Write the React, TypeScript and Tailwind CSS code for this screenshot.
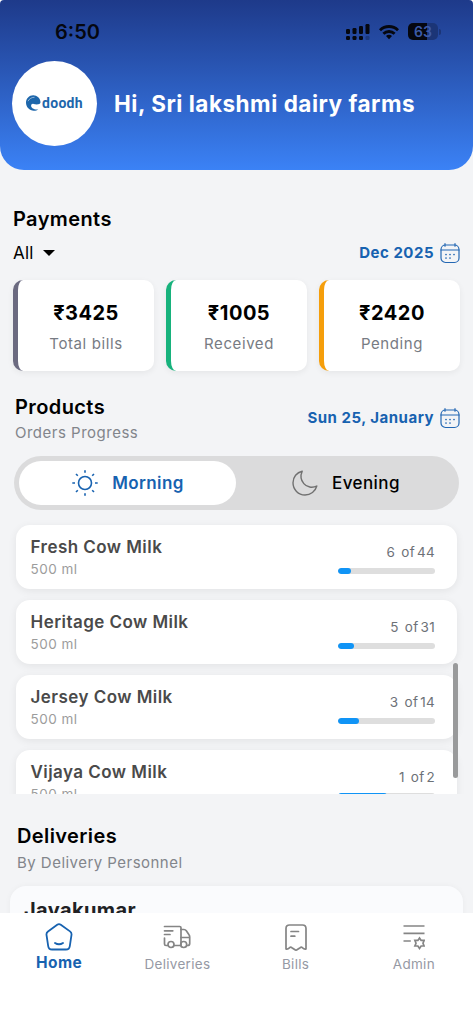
import type { ReactNode } from 'react';

type Payment = { amount: string; label: string; border: string };
type Product = { name: string; size: string; done: number; total: number };

const payments: Payment[] = [
  { amount: '₹3425', label: 'Total bills', border: 'border-[#6b6a80]' },
  { amount: '₹1005', label: 'Received', border: 'border-[#17b27c]' },
  { amount: '₹2420', label: 'Pending', border: 'border-[#f59e0b]' },
];

const products: Product[] = [
  { name: 'Fresh Cow Milk', size: '500 ml', done: 6, total: 44 },
  { name: 'Heritage Cow Milk', size: '500 ml', done: 5, total: 31 },
  { name: 'Jersey Cow Milk', size: '500 ml', done: 3, total: 14 },
  { name: 'Vijaya Cow Milk', size: '500 ml', done: 1, total: 2 },
];

function StatusIcons() {
  return (
    <div className="flex items-center gap-[9px] text-[#05070f]">
      <svg width="24" height="18" viewBox="0 0 24 18" fill="currentColor">
        <rect x="0" y="6" width="4" height="5" rx="1.2" />
        <rect x="6.5" y="5" width="4" height="6" rx="1.2" />
        <rect x="13" y="3" width="4" height="8" rx="1.2" />
        <rect x="19.5" y="1" width="4" height="10" rx="1.2" />
        <rect x="0" y="13" width="4" height="4" rx="1.2" />
        <rect x="6.5" y="13" width="4" height="4" rx="1.2" />
        <rect x="13" y="13" width="4" height="4" rx="1.2" />
        <rect x="19.5" y="13" width="4" height="4" rx="1.2" opacity="0.25" />
      </svg>
      <svg width="20" height="16" viewBox="0 0 20 16" fill="none" stroke="currentColor" strokeWidth="2.8">
        <path d="M1 6.2a12.8 12.8 0 0 1 18 0" />
        <path d="M4.4 9.8a8 8 0 0 1 11.2 0" />
        <path d="M10 10.8c1.2 0 2.2.4 3 1.1L10 15.2l-3-3.3c.8-.7 1.8-1.1 3-1.1z" fill="currentColor" stroke="none" />
      </svg>
      <div className="flex items-center gap-px">
        <div className="flex h-[17px] w-[30px] items-center justify-center overflow-hidden rounded-[5px] bg-linear-to-r from-[#05070f] from-63% to-[#1b3577] to-63% text-[14px] font-semibold text-[#3c5ba8]">
          63
        </div>
        <div className="h-[6px] w-[2px] rounded-r-full bg-[#1b3577]" />
      </div>
    </div>
  );
}

function Logo() {
  return (
    <div className="flex size-[85px] items-center justify-center rounded-full bg-white">
      <div className="-mt-0.5 flex items-center gap-px text-[#1d66ab]">
        <svg width="15" height="16" viewBox="0 0 15 16">
          <path
            d="M14.5 7.2C14.5 3.2 11 .3 7.2.3 3.2.3 0 3.500 0 7.800c0 4.400 3.500 7.900 7.800 7.900 2 0 3.300-.5 4.500-1.500-3.300.8-7.200-.9-7.200-3.500 0-1.500 1.200-2.300 2.500-1.800 3 1 6.900.5 6.900-1.700z"
            fill="currentColor"
          />
          <path d="M2 6.200C3.500 3.500 5.800 2.300 8.500 2.300" fill="none" stroke="#fff" strokeWidth="0.5" />
        </svg>
        <span className="font-[Roboto,sans-serif] text-[14px] leading-4 font-bold tracking-[0.3px]">doodh</span>
      </div>
    </div>
  );
}

function CalendarIcon() {
  return (
    <svg width="20" height="21" viewBox="0 0 20 21" fill="none" stroke="#2367b3" strokeWidth="1.2" strokeLinecap="round">
      <rect x="1" y="2" width="18" height="17.5" rx="4.5" />
      <path d="M1 7h18M5 .7v2.5M15 .7v2.5" />
      <path d="M6 11.5h.01M10 11.5h.01M14 11.5h.01M6 15h.01M10 15h.01" strokeWidth="1.7" />
    </svg>
  );
}

function DateButton({ label }: { label: string }) {
  return (
    <button className="flex items-center gap-[6px] text-[15px] leading-5 font-bold tracking-[0.5px] text-[#1762b0]">
      {label}
      <CalendarIcon />
    </button>
  );
}

function SunIcon() {
  return (
    <svg width="26" height="26" viewBox="0 0 26 26" fill="none" stroke="#1762b0" strokeWidth="1.6">
      <circle cx="13" cy="13" r="6.5" />
      <path d="M13 .3v2.400M13 23.300v2.400M.3 13h2.700M23 13h2.700M4 4l1.800 1.800M20.200 20.200 22 22M22 4l-1.800 1.800M5.800 20.200 4 22" />
    </svg>
  );
}

function MoonIcon() {
  return (
    <svg width="26" height="26" viewBox="0 0 26 26" fill="none" stroke="#707070" strokeWidth="1.4" strokeLinejoin="round">
      <path d="M10.2 1.2C4.8 2.5 1 7 1 12.800 1 19.500 6.300 25 13 25c5.600 0 10.400-3.700 11.800-9-4.500 2.300-9.900 1.300-13-2.400-3-3.600-3.400-8.400-1.600-12.400z" />
    </svg>
  );
}

function PaymentCard({ payment }: { payment: Payment }) {
  return (
    <div
      className={`flex h-[91px] flex-1 flex-col items-center rounded-[10px] border-l-[5px] bg-white pt-[21px] shadow-[0_2px_6px_rgba(0,0,0,0.06)] ${payment.border}`}
    >
      <div className="text-[20px] leading-6 font-bold tracking-[0.5px] text-black">{payment.amount}</div>
      <div className="mt-[9px] text-[15px] leading-5 tracking-[0.6px] text-[#777b83]">{payment.label}</div>
    </div>
  );
}

function ProductCard({ product }: { product: Product }) {
  return (
    <div className="flex h-16 shrink-0 justify-between rounded-[14px] bg-white pr-[22px] pl-[14.5px] shadow-[0_2px_8px_rgba(0,0,0,0.07)]">
      <div className="pt-[11px]">
        <div className="text-[17px] leading-[22px] font-semibold tracking-[0.45px] text-[#4a4a4a]">{product.name}</div>
        <div className="text-[13.5px] leading-[22px] tracking-[0.5px] text-[#9c9c9c]">{product.size}</div>
      </div>
      <div className="flex flex-col items-end pt-[17px]">
        <div className="text-[13.5px] leading-5 tracking-[0.3px] whitespace-nowrap text-[#6d7177]">
          <span className="mr-[6px]">{product.done}</span>
          <span className="mr-[2px]">of</span>
          <span>{product.total}</span>
        </div>
        <div className="mt-[6px] h-[6px] w-[97px] overflow-hidden rounded-full bg-[#dedede]">
          <div
            className="h-full rounded-full bg-[#1094f6]"
            style={{ width: `${(product.done / product.total) * 100}%` }}
          />
        </div>
      </div>
    </div>
  );
}

function HomeIcon() {
  return (
    <svg width="28" height="28" viewBox="0 0 28 28" fill="none" stroke="#1762b0" strokeWidth="1.8" strokeLinecap="round" strokeLinejoin="round">
      <path d="M12.200 1.800 3 8.400c-1.200.9-1.700 2-1.500 3.400l1.700 11.300c.3 2.200 1.700 3.400 3.900 3.400h13.800c2.200 0 3.600-1.200 3.900-3.400l1.700-11.300c.2-1.400-.3-2.500-1.500-3.400l-9.200-6.600c-1.200-.9-2.400-.9-3.600 0z" />
      <path d="M10 20c2.400 1.600 5.600 1.600 8 0" strokeWidth="1.9" />
    </svg>
  );
}

function TruckIcon() {
  return (
    <svg width="28" height="24" viewBox="0 0 28 24" fill="none" stroke="#858585" strokeWidth="1.7" strokeLinecap="round">
      <path d="M1.500 1.500h15.200c.8 0 1.300.5 1.300 1.300v17.700h-6.500M1.500 5.800h8.300M1.500 9.500h5.500M1.500 13v6c0 1 .5 1.500 1.500 1.500h1.500" />
      <path d="M18 4.500h3c1 0 1.700.4 2.300 1.200l2.700 4c.5.7.7 1.400.7 2.300v6.500c0 1.300-.7 2-2 2h-.5M18 12.500h8.500" />
      <circle cx="8" cy="19.500" r="3" />
      <circle cx="20.700" cy="19.500" r="3" />
    </svg>
  );
}

function BillIcon() {
  return (
    <svg width="22" height="27" viewBox="0 0 22 27" fill="none" stroke="#858585" strokeWidth="1.7" strokeLinecap="round" strokeLinejoin="round">
      <path d="M1 25V4.500C1 2.200 2.200 1 4.500 1h13C19.800 1 21 2.200 21 4.500V25c-1.500.6-2.600-.2-3.700-1.300-.7-.7-1.400-.6-2.200 0L12 25.800c-.7.5-1.300.5-2 0l-3.100-2.100c-.8-.6-1.500-.7-2.200 0C3.600 24.800 2.500 25.600 1 25z" />
      <path d="M6 7.500h7.500M6 12.200h3.800" />
    </svg>
  );
}

function AdminIcon() {
  return (
    <svg width="22" height="26" viewBox="0 0 22 26" fill="none" stroke="#858585" strokeWidth="1.7">
      <path d="M.5 2h21M.5 9.400h21M.5 17h7.300" />
      <path d="M16.500 14l1.600 2.400h3L20 19.200l1.100 2.800h-3l-1.600 2.400-1.600-2.400h-3l1.100-2.800-1.100-2.800h3z" strokeWidth="1.7" />
    </svg>
  );
}

function NavItem({ icon, label, active = false }: { icon: ReactNode; label: string; active?: boolean }) {
  return (
    <div className="flex flex-1 flex-col items-center">
      <div className="flex h-7 items-center">{icon}</div>
      {active ? (
        <div className="mt-[2px] text-[15.5px] leading-5 font-bold tracking-[0.4px] text-[#1762b0]">{label}</div>
      ) : (
        <div className="mt-[3px] text-[13.5px] leading-5 tracking-[0.3px] text-[#9699a4]">{label}</div>
      )}
    </div>
  );
}

export default function App() {
  return (
    <div className="flex h-[1024px] w-[473px] flex-col overflow-hidden bg-[#f3f4f6] font-[Inter,sans-serif]">
      <div className="bg-linear-to-b from-white from-50% to-transparent to-50%">
        <header className="h-[170px] rounded-t-[4px] rounded-b-[24px] bg-linear-to-b from-[#1e3a8a] to-[#3b82f6]">
          <div className="flex h-[61px] items-center justify-between pt-0.5 pr-[32px] pl-[55px]">
            <div className="text-[20px] leading-6 font-semibold text-[#05070f]">6:50</div>
            <StatusIcons />
          </div>
          <div className="flex items-center gap-[17px] pl-3">
            <Logo />
            <h1 className="pt-px text-[22.5px] leading-7 font-bold tracking-[0.52px] whitespace-nowrap text-white">
              Hi, Sri lakshmi dairy farms
            </h1>
          </div>
        </header>
      </div>

      <main className="flex h-[743px] flex-col overflow-hidden">
        <section className="px-[13px] pt-9">
          <h2 className="text-[20px] leading-[26px] font-semibold tracking-[0.4px] text-black">Payments</h2>
          <div className="mt-[9px] flex items-center justify-between">
            <button className="flex h-6 items-center gap-[9px] text-[17px] leading-6 tracking-[0.2px] text-black">
              All
              <svg width="12" height="6" viewBox="0 0 12 6">
                <path d="M0 0h12L6 6z" />
              </svg>
            </button>
            <DateButton label="Dec 2025" />
          </div>
          <div className="mt-[15px] flex gap-3">
            {payments.map((payment) => (
              <PaymentCard key={payment.label} payment={payment} />
            ))}
          </div>
        </section>

        <section className="mt-[23px]">
          <div className="flex items-center justify-between pr-[13px] pl-[15px]">
            <div>
              <h2 className="text-[20px] leading-[26px] font-semibold tracking-[0.4px] text-black">Products</h2>
              <p className="mt-[2px] text-[15px] leading-[22px] tracking-[0.5px] text-[#82858b]">Orders Progress</p>
            </div>
            <div className="pb-0.5">
              <DateButton label="Sun 25, January" />
            </div>
          </div>

          <div className="mx-[14px] mt-3 flex h-[54px] rounded-full bg-[#dbdbdc] p-[5px] text-[17px] tracking-[0.4px]">
            <div className="flex flex-1 items-center justify-center gap-[14px] rounded-full bg-white pl-px font-semibold text-[#1762b0]">
              <SunIcon />
              <span className="pt-px">Morning</span>
            </div>
            <div className="flex flex-1 items-center justify-center gap-[14px] pl-0.5 text-black">
              <MoonIcon />
              <span className="pt-px font-medium">Evening</span>
            </div>
          </div>

          <div className="relative mt-[9px] h-[275px] overflow-hidden px-4 pt-[6px]">
            <div className="flex flex-col gap-[11px]">
              {products.map((product) => (
                <ProductCard key={product.name} product={product} />
              ))}
            </div>
            <div className="absolute top-[144px] right-[15px] h-[115px] w-[5px] rounded-full bg-[#999a9b]" />
          </div>
        </section>

        <section className="mt-[29px]">
          <h2 className="pl-[17px] text-[20px] leading-[26px] font-semibold tracking-[0.4px] text-black">Deliveries</h2>
          <p className="mt-[2px] pl-[17px] text-[15px] leading-6 tracking-[0.47px] text-[#82858b]">By Delivery Personnel</p>
          <div className="mx-[10px] mt-[11px] h-[100px] rounded-[16px] bg-[#fafbfd] px-[14px] pt-[11px] shadow-[0_0_6px_rgba(0,0,0,0.04)]">
            <div className="text-[20px] leading-[26px] font-bold tracking-[0.4px] text-[#202124]">Jayakumar</div>
          </div>
        </section>
      </main>

      <nav className="flex h-[111px] bg-white pt-[10px]">
        <NavItem icon={<HomeIcon />} label="Home" active />
        <NavItem icon={<TruckIcon />} label="Deliveries" />
        <NavItem icon={<BillIcon />} label="Bills" />
        <NavItem icon={<AdminIcon />} label="Admin" />
      </nav>
    </div>
  );
}
